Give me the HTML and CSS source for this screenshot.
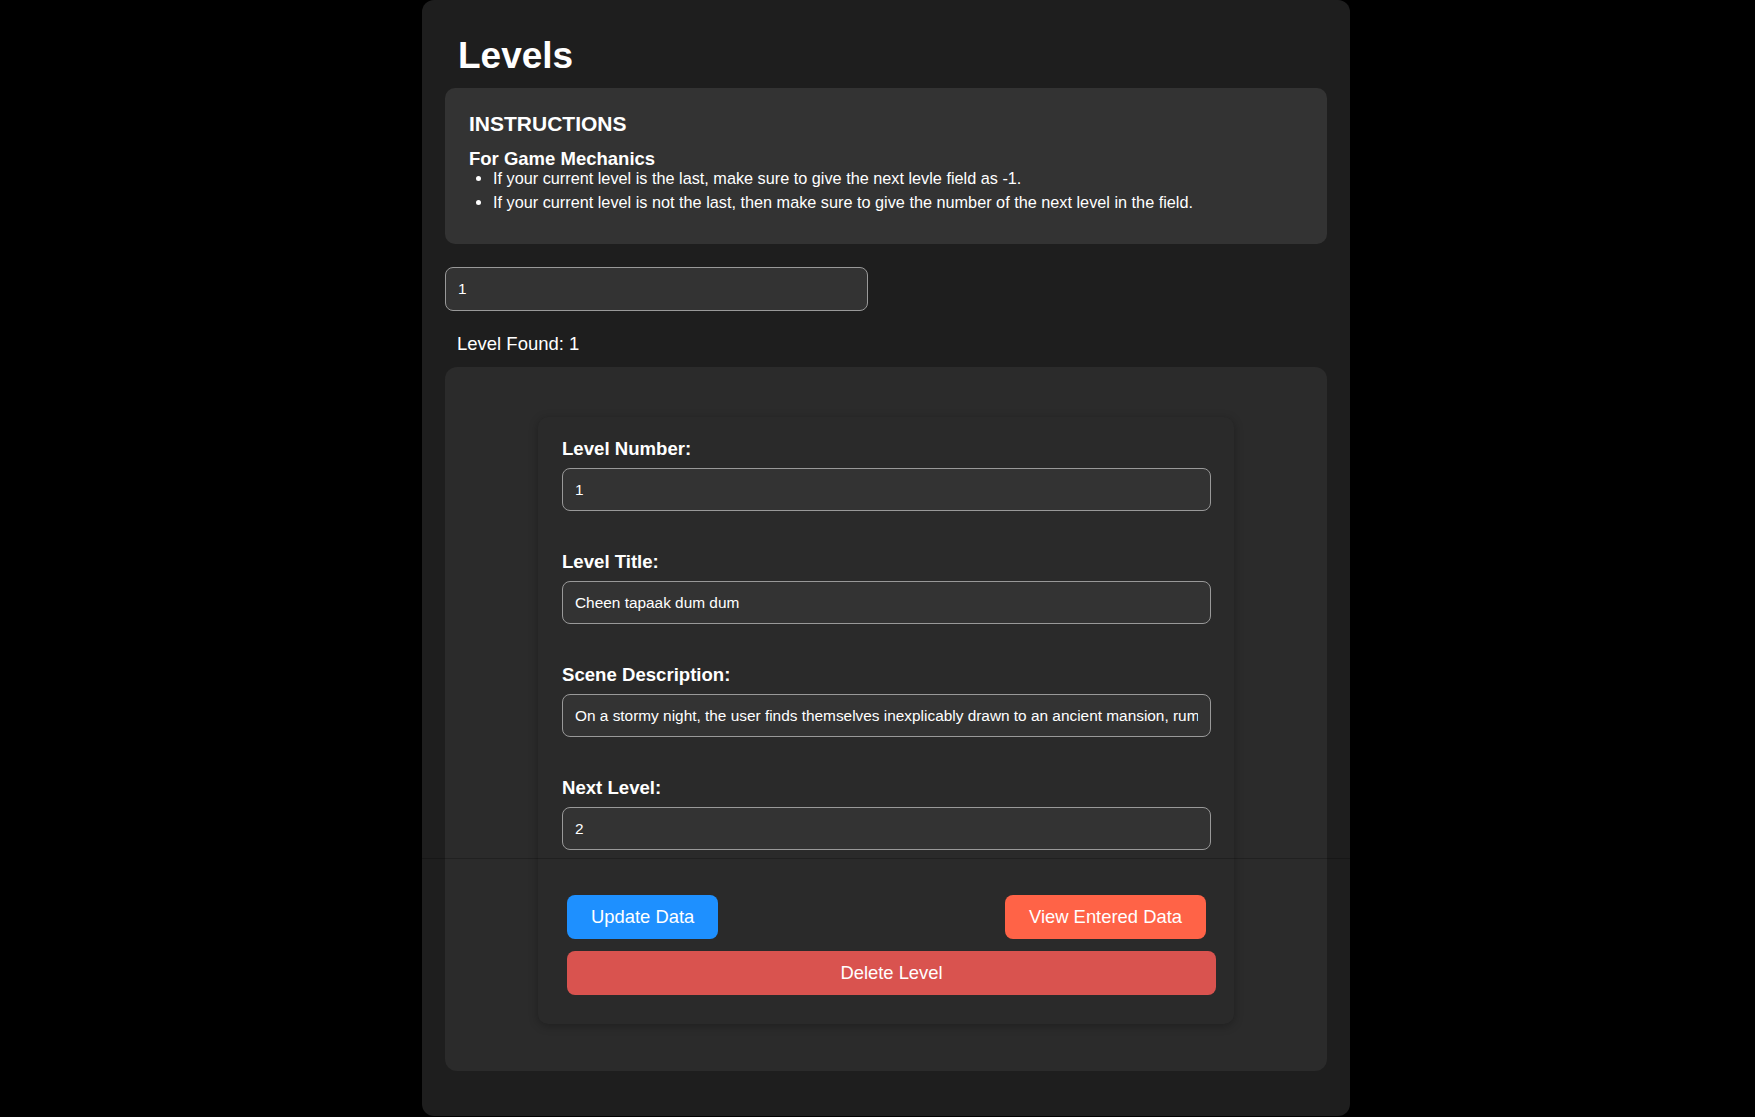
FILE: index.html
```html
<!DOCTYPE html>
<html lang="en">
<head>
<meta charset="utf-8">
<title>Levels</title>
<link rel="stylesheet" href="styles.css">
</head>
<body>
<div class="app">
  <h1 class="title">Levels</h1>
  <section class="instructions">
    <h3 class="instructions-head">INSTRUCTIONS</h3>
    <h4 class="instructions-sub">For Game Mechanics</h4>
    <ul class="instructions-list">
      <li>If your current level is the last, make sure to give the next levle field as -1.</li>
      <li>If your current level is not the last, then make sure to give the number of the next level in the field.</li>
    </ul>
  </section>
  <input class="search-input" type="text" value="1">
  <p class="found">Level Found: 1</p>
  <div class="panel">
    <form class="card">
      <div class="field">
        <label class="field-label">Level Number:</label>
        <input class="field-input" type="text" value="1">
      </div>
      <div class="field">
        <label class="field-label">Level Title:</label>
        <input class="field-input" type="text" value="Cheen tapaak dum dum">
      </div>
      <div class="field">
        <label class="field-label">Scene Description:</label>
        <input class="field-input" type="text" value="On a stormy night, the user finds themselves inexplicably drawn to an ancient mansion, rumored to be haunted by restless spirits.">
      </div>
      <div class="field">
        <label class="field-label">Next Level:</label>
        <input class="field-input" type="text" value="2">
      </div>
      <div class="btn-row">
        <button type="button" class="btn btn-blue">Update Data</button>
        <button type="button" class="btn btn-orange">View Entered Data</button>
      </div>
      <button type="button" class="btn btn-red btn-full">Delete Level</button>
    </form>
  </div>
</div>
</body>
</html>
```

FILE: styles.css
```css
* { box-sizing: border-box; }

body {
  margin: 0;
  padding-left: 17px;
  background: #000;
  color: #fff;
  font-family: "Liberation Sans", Arial, sans-serif;
}

.app {
  position: relative;
  width: 928px;
  margin: 0 auto;
  background: #1e1e1e;
  border-radius: 12px;
  padding: 34px 23px 45px;
}

.app::after {
  content: "";
  position: absolute;
  left: 0;
  right: 0;
  top: 858px;
  height: 1px;
  background: rgba(0, 0, 0, 0.22);
}

.title {
  margin: 0 0 10px;
  padding-left: 13px;
  font-size: 37px;
  line-height: 44px;
  font-weight: bold;
}

.instructions {
  background: #333;
  border-radius: 10px;
  padding: 24px 24px 27px;
}

.instructions-head {
  margin: 0 0 12px;
  font-size: 21px;
  line-height: 24px;
  font-weight: bold;
}

.instructions-sub {
  margin: 0;
  font-size: 18.5px;
  line-height: 21px;
  font-weight: bold;
}

.instructions-list {
  margin: 0;
  padding-left: 24px;
  font-size: 16.25px;
  line-height: 18px;
}

.instructions-list li {
  margin-bottom: 6px;
}

.search-input {
  display: block;
  width: 423px;
  height: 44px;
  margin-top: 23px;
  padding: 0 12px;
  border: 1px solid #999;
  border-radius: 8px;
  background: #333;
  color: #fff;
  font-family: "Liberation Sans", Arial, sans-serif;
  font-size: 15.4px;
  outline: none;
}

.found {
  margin: 22px 0 13px;
  padding-left: 12px;
  font-size: 18.5px;
  line-height: 21px;
}

.panel {
  display: flex;
  justify-content: center;
  background: #2b2b2b;
  border-radius: 12px;
  padding: 50px 0 47px;
}

.card {
  width: 696px;
  padding: 21px 23px 24px 24px;
  background: #2a2a2a;
  border-radius: 10px;
  box-shadow: 0 2px 10px rgba(0, 0, 0, 0.28);
}

.field {
  margin-bottom: 40px;
}

.field-label {
  display: block;
  margin-bottom: 9px;
  font-size: 18.6px;
  line-height: 21px;
  font-weight: bold;
}

.field-input {
  display: block;
  width: 100%;
  height: 43px;
  padding: 0 12px;
  border: 1px solid #999;
  border-radius: 8px;
  background: #333;
  color: #fff;
  font-family: "Liberation Sans", Arial, sans-serif;
  font-size: 15.4px;
  outline: none;
}

.btn-row {
  display: flex;
  justify-content: space-between;
  margin-bottom: 7px;
}

.btn {
  display: block;
  height: 44px;
  margin: 5px;
  padding: 0 24px;
  border: none;
  border-radius: 8px;
  color: #fff;
  font-family: "Liberation Sans", Arial, sans-serif;
  font-size: 18.4px;
  cursor: pointer;
}

.btn-blue { background: #1e90ff; }
.btn-orange { background: #ff6347; }
.btn-red { background: #d9534f; }

.btn-full {
  width: 100%;
}
```
